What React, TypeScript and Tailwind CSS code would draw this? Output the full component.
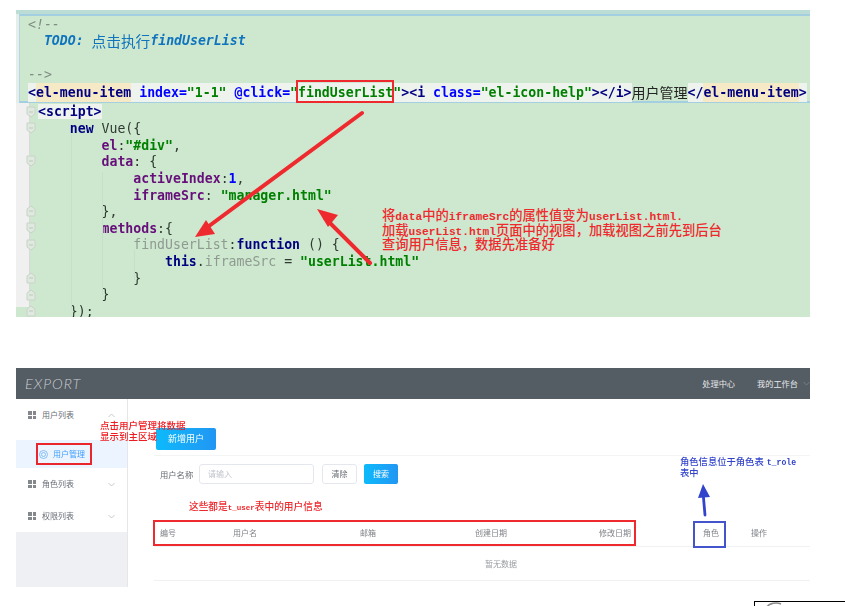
import React from "react";

const MONO = "font-['DejaVu_Sans_Mono','Noto_Sans_CJK_SC',monospace]";
const CJK = "font-['Noto_Sans_CJK_SC','Noto_Sans',sans-serif]";

function Fold({ up }: { up?: boolean }) {
  return (
    <svg width="10" height="12" viewBox="0 0 10 12" className="absolute left-[-4px] top-[2px]">
      <path
        d={up ? "M1 11V4L5 1L9 4V11Z" : "M1 1V8L5 11L9 8V1Z"}
        fill="#dfe9df"
        stroke="#c8d4c8"
      />
      <path d="M3 6H7" stroke="#bcc9bc" />
    </svg>
  );
}

function Line({ fold, children }: { fold?: "up" | "down"; children?: React.ReactNode }) {
  return (
    <div className="flex h-[16.67px] items-center">
      <div className="relative h-full w-[8px] shrink-0">{fold && <Fold up={fold === "up"} />}</div>
      <div className="whitespace-pre">{children}</div>
    </div>
  );
}

const Nv = ({ c }: { c: string }) => <span className="text-[#000080]">{c}</span>;
const Bl = ({ c }: { c: string }) => <span className="text-[#0000ff]">{c}</span>;
const Gr = ({ c }: { c: string }) => <span className="text-[#008000]">{c}</span>;
const Pu = ({ c }: { c: string }) => <span className="text-[#660e7a]">{c}</span>;
const Gy = ({ c }: { c: string }) => <span className="text-[#8f9a90]">{c}</span>;
const Dk = ({ c }: { c: string }) => <span className="text-[#2f3a30] font-normal">{c}</span>;

function GridIcon() {
  return (
    <span className="grid h-[8px] w-[8px] shrink-0 grid-cols-2 gap-[1px]">
      <i className="bg-[#84878c]" />
      <i className="bg-[#84878c]" />
      <i className="bg-[#84878c]" />
      <i className="bg-[#84878c]" />
    </span>
  );
}

function Chevron({ up }: { up?: boolean }) {
  return (
    <svg width="7" height="5" viewBox="0 0 7 5" className="ml-auto mr-[12px]">
      <path d={up ? "M0.5 4L3.5 1L6.5 4" : "M0.5 1L3.5 4L6.5 1"} fill="none" stroke="#b8bcc2" strokeWidth="0.8" />
    </svg>
  );
}

function MenuGroup({ label, up }: { label: string; up?: boolean }) {
  return (
    <div className="flex h-[32px] items-center gap-[6px] pl-[12px] text-[8px] text-[#696e75]">
      <GridIcon />
      <span>{label}</span>
      <Chevron up={up} />
    </div>
  );
}

const Lat = ({ c }: { c: string }) => (
  <span className="font-['Liberation_Mono',monospace] text-[11.2px] font-bold">{c}</span>
);

export default function App() {
  return (
    <div className={`relative h-[606px] w-[845px] overflow-hidden bg-white ${CJK}`}>
      {/* code screenshot */}
      <section className={`relative ml-[16px] mt-[10px] h-[307px] w-[794px] overflow-hidden bg-[#cde8cf] text-[13.2px] font-bold leading-none blur-[0.35px] ${MONO}`}>
        <div className="h-[4px] bg-[#bcdcd6]" />
        <div className="border-l-[3px] border-l-[#e6eeea]">
          <div className="h-[89px] border-y-2 border-l border-y-[#a3cfe0] border-l-[#b4d6e6] pl-[8px]">
            <div className="flex h-[16.67px] items-center whitespace-pre font-normal italic text-[#7f8a80]">{"<!--"}</div>
            <div className="flex h-[16.67px] items-center whitespace-pre italic text-[#0f74bd]">
              {"  TODO: "}
              <span className={`text-[14.7px] font-normal not-italic ${CJK}`}>点击执行</span>
              findUserList
            </div>
            <div className="h-[16.67px]" />
            <div className="flex h-[16.67px] items-center whitespace-pre font-normal italic text-[#7f8a80]">{"-->"}</div>
            <div className="flex h-[19px] items-center whitespace-pre">
              <span className="flex h-full items-center bg-[#eef3ee]">
                <Nv c="<" />
                <span className="flex h-full items-center bg-[#f5e9c6]">
                  <Nv c="el-menu-item" />
                </span>
                <Nv c=" " />
                <Bl c="index" />
                <Bl c="=" />
                <Gr c={'"1-1"'} />
                <Nv c=" " />
                <Bl c="@click" />
                <Bl c="=" />
                <Gr c={'"findUserList"'} />
                <Nv c="><i " />
                <Bl c="class" />
                <Bl c="=" />
                <Gr c={'"el-icon-help"'} />
                <Nv c="></i>" />
              </span>
              <span className={`text-[14px] font-normal text-[#222] ${CJK}`}>用户管理</span>
              <span className="flex h-full items-center bg-[#eef3ee]">
                <Nv c="</" />
                <span className="flex h-full items-center bg-[#f5e9c6]">
                  <Nv c="el-menu-item" />
                </span>
                <Nv c=">" />
              </span>
            </div>
          </div>
        </div>

        <div className="flex">
          <div className="h-[204px] w-[14px] shrink-0 border-r border-r-[#d9d9d9] bg-[#f0f0f0]" />
          <div className="pt-[0.5px]">
            <Line fold="down">
              <span className="bg-[#eef3ee]">
                <Nv c="<script>" />
              </span>
            </Line>
            <Line fold="down">
              <Nv c="    new " />
              <Dk c="Vue({" />
            </Line>
            <Line>
              <Pu c="        el" />
              <Dk c=":" />
              <Gr c={'"#div"'} />
              <Dk c="," />
            </Line>
            <Line fold="down">
              <Pu c="        data" />
              <Dk c=": {" />
            </Line>
            <Line>
              <Pu c="            activeIndex" />
              <Dk c=":" />
              <Bl c="1" />
              <Dk c="," />
            </Line>
            <Line>
              <Pu c="            iframeSrc" />
              <Dk c=": " />
              <Gr c={'"manager.html"'} />
            </Line>
            <Line fold="up">
              <Dk c="        }," />
            </Line>
            <Line fold="down">
              <Pu c="        methods" />
              <Dk c=":{" />
            </Line>
            <Line fold="down">
              <span className="font-normal">
                <Gy c="            findUserList" />
              </span>
              <Dk c=":" />
              <Nv c="function " />
              <Dk c="() {" />
            </Line>
            <Line>
              <Nv c="                this" />
              <Dk c="." />
              <span className="font-normal">
                <Gy c="iframeSrc" />
              </span>
              <Dk c=" = " />
              <Gr c={'"userList.html"'} />
            </Line>
            <Line fold="up">
              <Dk c="            }" />
            </Line>
            <Line fold="up">
              <Dk c="        }" />
            </Line>
            <Line fold="up">
              <Dk c="    });" />
            </Line>
          </div>
        </div>

        {/* indent guides */}
        <div className="absolute left-[55px] top-[125px] h-[175px] w-px bg-[#c6dfc8]" />
        <div className="absolute left-[86px] top-[162px] h-[123px] w-px bg-[#c6dfc8]" />
        <div className="absolute left-[118px] top-[240px] h-[30px] w-px bg-[#c6dfc8]" />
      </section>

      {/* app screenshot */}
      <section className="ml-[16px] mt-[51px] flex h-[219px] w-[794px] flex-col overflow-hidden blur-[0.35px]">
        <header className="flex h-[31px] shrink-0 items-center bg-[#545c64] pl-[9px]">
          <span className="font-['Lato',sans-serif] text-[14.5px] font-light italic tracking-[1px] text-[#c9ccd0]">EXPORT</span>
          <span className="ml-auto text-[8.2px] text-[#e6e8ea]">处理中心</span>
          <span className="ml-[22px] text-[8.2px] text-[#e6e8ea]">我的工作台</span>
          <svg width="7" height="5" viewBox="0 0 7 5" className="ml-[5px]">
            <path d="M0.5 1L3.5 4L6.5 1" fill="none" stroke="#7f868d" strokeWidth="0.8" />
          </svg>
        </header>
        <div className="flex min-h-0 flex-1">
          <aside className="flex w-[112px] shrink-0 flex-col border-r border-r-[#e6e6e6] bg-[#eef0f4]">
            <div className="bg-white">
              <div className="pb-[9px]">
                <MenuGroup label="用户列表" up />
              </div>
              <div className="flex h-[28px] items-center gap-[5px] bg-[#ecf5ff] pl-[23px] text-[8px] text-[#409eff]">
                <svg width="9" height="9" viewBox="0 0 9 9">
                  <circle cx="4.5" cy="4.5" r="4" fill="none" stroke="#6db2f5" strokeWidth="0.8" />
                  <circle cx="4.5" cy="4.5" r="2" fill="none" stroke="#6db2f5" strokeWidth="0.8" />
                </svg>
                <span>用户管理</span>
              </div>
              <MenuGroup label="角色列表" />
              <MenuGroup label="权限列表" />
            </div>
          </aside>
          <main className="flex-1 pl-[26px] pt-[29px]">
            <button className="ml-[2px] flex h-[22px] w-[60px] items-center justify-center rounded-[2px] bg-gradient-to-r from-[#0bbafb] to-[#2196f3] text-[9px] text-white">
              新增用户
            </button>
            <div className="mt-[5px] h-px bg-[#f2f4f6]" />
            <div className="mt-[8px] flex h-[20px] items-center pl-[6px]">
              <span className="w-[39px] text-[8.3px] text-[#666b72]">用户名称</span>
              <div className="flex h-[20px] w-[115px] items-center rounded-[3px] border border-[#e4e7ed] pl-[8px] text-[8px] text-[#c0c4cc]">
                请输入
              </div>
              <button className="ml-[8px] h-[20px] w-[35px] rounded-[3px] border border-[#e4e7ed] text-[8px] text-[#666b72]">清除</button>
              <button className="ml-[7px] h-[20px] w-[34px] rounded-[2px] bg-gradient-to-r from-[#0bbafb] to-[#2196f3] text-[8px] text-white">搜索</button>
            </div>
            <div className="mt-[36px] grid h-[27px] grid-cols-[73px_127px_115px_124px_104px_48px_1fr] items-center border-b border-b-[#f0f1f3] pl-[6px] text-[8px] text-[#7f8287]">
              <span>编号</span>
              <span>用户名</span>
              <span>邮箱</span>
              <span>创建日期</span>
              <span>修改日期</span>
              <span>角色</span>
              <span>操作</span>
            </div>
            <div className="flex h-[34px] items-center border-b border-b-[#f0f1f3] pl-[331px] text-[8px] text-[#999ca1]">
              暂无数据
            </div>
          </main>
        </div>
      </section>

      {/* annotations over both screenshots */}
      <div className="absolute left-[296px] top-[80px] h-[23px] w-[98px] border-2 border-[#ee2a2e]" />
      <div className="absolute left-[36px] top-[443px] h-[22px] w-[56px] border-2 border-[#e8262b]" />
      <div className="absolute left-[153px] top-[520px] h-[26px] w-[483px] border-2 border-[#ee2a2e]" />
      <div className="absolute left-[693px] top-[521px] h-[27px] w-[33px] border-2 border-[#4455cc]" />

      <div className="absolute left-[382px] top-[209px] whitespace-nowrap text-[13.3px] font-medium leading-[12.7px] text-[#ee2a2e]">
        <div>将<Lat c="data" />中的<Lat c="iframeSrc" />的属性值变为<Lat c="userList.html." /></div>
        <div>加载<Lat c="userList.html" />页面中的视图，加载视图之前先到后台</div>
        <div>查询用户信息，数据先准备好</div>
      </div>
      <div className="absolute left-[100px] top-[420px] whitespace-nowrap text-[9.5px] font-medium leading-[11px] text-[#ee1c22]">
        <div>点击用户管理将数据</div>
        <div>显示到主区域</div>
      </div>
      <div className="absolute left-[189px] top-[501px] whitespace-nowrap text-[9.7px] font-medium leading-[11px] text-[#ee2a2e]">
        这些都是<span className="font-['Liberation_Mono',monospace] text-[7.5px] font-bold">t_user</span>表中的用户信息
      </div>
      <div className="absolute left-[680px] top-[457px] whitespace-nowrap text-[9.3px] font-medium leading-[9.5px] text-[#3344cc]">
        <div>角色信息位于角色表<span className="ml-[3px] font-['Liberation_Mono',monospace] text-[8.2px] font-bold">t_role</span></div>
        <div>表中</div>
      </div>

      <svg className="pointer-events-none absolute left-0 top-0" width="845" height="606" viewBox="0 0 845 606">
        <path d="M362 113L205 229" stroke="#ee2a2e" strokeWidth="4" strokeLinecap="round" fill="none" />
        <path d="M195 237L206 220L215 234Z" fill="#ee2a2e" />
        <path d="M370 263L325 218" stroke="#ee2a2e" strokeWidth="4" strokeLinecap="round" fill="none" />
        <path d="M317 209L338 215L328 227Z" fill="#ee2a2e" />
        <path d="M705 515L703 492" stroke="#3344cc" strokeWidth="2.8" strokeLinecap="round" fill="none" />
        <path d="M703 484L710 497L698 498Z" fill="#3344cc" />
      </svg>

      {/* cropped box in the corner */}
      <div className="absolute left-[754px] top-[601px] h-[20px] w-[100px] border border-black bg-white">
        <svg width="20" height="5" viewBox="0 0 20 5" className="ml-[11px]">
          <path d="M1 5C3 1 11 0 15 2" fill="none" stroke="#8a8a8a" strokeWidth="1.4" />
        </svg>
      </div>
    </div>
  );
}
